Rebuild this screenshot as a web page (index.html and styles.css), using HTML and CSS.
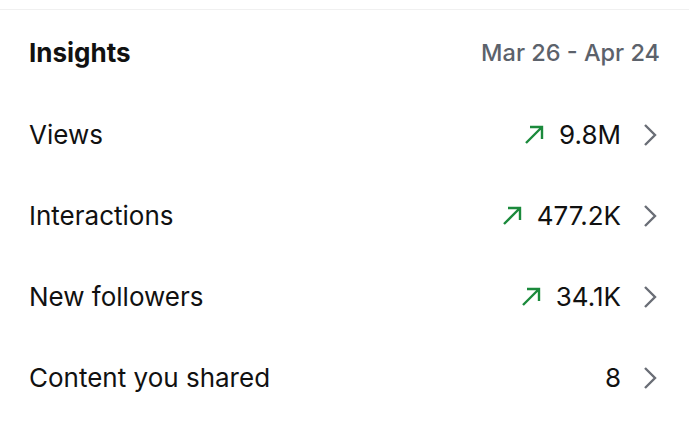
FILE: index.html
```html
<!DOCTYPE html>
<html lang="en">
<head>
    <meta charset="UTF-8">
    <meta name="viewport" content="width=device-width, initial-scale=1.0">
    <title>Insights</title>
    <link rel="stylesheet" href="styles.css">
</head>
<body>

    <div class="topbar"></div>

    <div class="header">
        <h1>Insights</h1>
        <span class="range">Mar 26 - Apr 24</span>
    </div>

    <div class="row">
        <span class="label">Views</span>
        <span class="value">
            <svg class="trend" width="20" height="20" viewBox="0 0 20 20"><path d="M2 18 L18 2 M6 2 H18 V14" fill="none" stroke="#1b8a3c" stroke-width="2.4"/></svg>
            9.8M
            <svg class="chev" width="14" height="24" viewBox="0 0 14 24"><path d="M2 2 L12 12 L2 22" fill="none" stroke="#6a6e76" stroke-width="2.4"/></svg>
        </span>
    </div>

    <div class="row">
        <span class="label">Interactions</span>
        <span class="value">
            <svg class="trend" width="20" height="20" viewBox="0 0 20 20"><path d="M2 18 L18 2 M6 2 H18 V14" fill="none" stroke="#1b8a3c" stroke-width="2.4"/></svg>
            477.2K
            <svg class="chev" width="14" height="24" viewBox="0 0 14 24"><path d="M2 2 L12 12 L2 22" fill="none" stroke="#6a6e76" stroke-width="2.4"/></svg>
        </span>
    </div>

    <div class="row">
        <span class="label">New followers</span>
        <span class="value">
            <svg class="trend" width="20" height="20" viewBox="0 0 20 20"><path d="M2 18 L18 2 M6 2 H18 V14" fill="none" stroke="#1b8a3c" stroke-width="2.4"/></svg>
            34.1K
            <svg class="chev" width="14" height="24" viewBox="0 0 14 24"><path d="M2 2 L12 12 L2 22" fill="none" stroke="#6a6e76" stroke-width="2.4"/></svg>
        </span>
    </div>

    <div class="row">
        <span class="label">Content you shared</span>
        <span class="value">
            8
            <svg class="chev" width="14" height="24" viewBox="0 0 14 24"><path d="M2 2 L12 12 L2 22" fill="none" stroke="#6a6e76" stroke-width="2.4"/></svg>
        </span>
    </div>

</body>
</html>
```

FILE: styles.css
```css
body { margin: 0; background: #fff; font-family: Inter, "Noto Sans", sans-serif; color: #111; }
.topbar { height: 9px; border-bottom: 1px solid #f0f0f0; }
.header { display: flex; justify-content: space-between; align-items: center; height: 84px; padding: 0 29px; }
h1 { margin: 0; font-size: 26px; font-weight: 700; }
.range { font-size: 23.5px; font-weight: 500; color: #5c626b; }
.row { display: flex; justify-content: space-between; align-items: center; height: 81px; padding: 0 32px 0 29px; font-size: 26px; }
.value { display: flex; align-items: center; }
.trend { margin-right: 15px; }
.chev { margin-left: 22px; }
```
